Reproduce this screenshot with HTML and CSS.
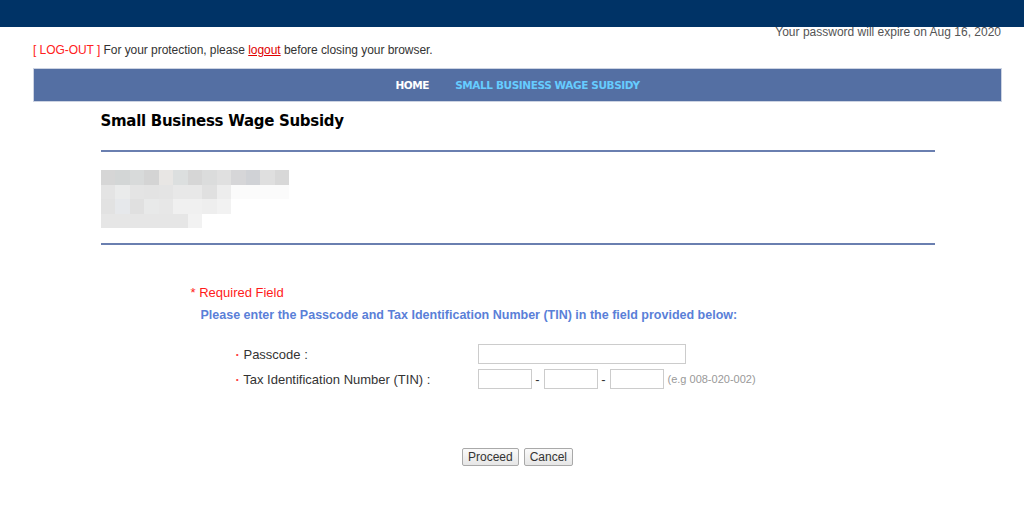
FILE: index.html
```html
<!DOCTYPE html>
<html>
<head>
    <meta charset="utf-8">
    <link rel="stylesheet" href="styles.css">
</head>
<body>

<div class="topbar"></div>
<div class="expire">Your password will expire on Aug 16, 2020</div>

<div class="page">
    <p class="logout-line">
        <span class="red">[ LOG-OUT ]</span> For your protection, please
        <a href="#" class="red-link">logout</a> before closing your browser.
    </p>

    <div class="nav">
        <a href="#" class="nav-home">HOME</a>
        <a href="#" class="nav-current">SMALL BUSINESS WAGE SUBSIDY</a>
    </div>

    <div class="content">
        <h1 class="title">Small Business Wage Subsidy</h1>
        <hr class="rule rule-top">

        <div class="blurred">
            <span style="background:#d6d6d6"></span><span style="background:#d3d6d6"></span><span style="background:#d8dada"></span><span style="background:#d4d4d4"></span><span style="background:#e8e6e4"></span><span style="background:#dcdfdf"></span><span style="background:#d6d6d6"></span><span style="background:#dbdcdc"></span><span style="background:#e0e0e0"></span><span style="background:#d6d6d8"></span><span style="background:#d0d2d6"></span><span style="background:#dfdfdf"></span><span style="background:#d8d8d8"></span>
            <span style="background:#e4e4e4"></span><span style="background:#eaebeb"></span><span style="background:#e4e4e4"></span><span style="background:#e3e3e3"></span><span style="background:#e4e4e4"></span><span style="background:#e8e8e8"></span><span style="background:#e8e8e8"></span><span style="background:#e0e0e0"></span><span style="background:#ededed"></span><span style="background:#fbfbfb"></span><span style="background:#fbfbfb"></span><span style="background:#fbfbfb"></span><span style="background:#fbfbfb"></span>
            <span style="background:#e2e2e2"></span><span style="background:#e6e8eb"></span><span style="background:#e0e0e0"></span><span style="background:#e8e9e9"></span><span style="background:#e7e7e7"></span><span style="background:#f0f0f0"></span><span style="background:#f0f0f0"></span><span style="background:#eeeeee"></span><span style="background:#f2f2f2"></span><span></span><span></span><span></span><span></span>
            <span style="background:#e6e6e6"></span><span style="background:#e6e6e6"></span><span style="background:#e6e6e6"></span><span style="background:#e6e6e6"></span><span style="background:#e6e6e6"></span><span style="background:#e6e6e6"></span><span style="background:#f2f2f2"></span>
        </div>

        <hr class="rule rule-bottom">

        <form class="tin-form">
            <p class="required">* Required Field</p>
            <p class="instructions">Please enter the Passcode and Tax Identification Number (TIN) in the field provided below:</p>

            <div class="fields">
                <label class="field-label"><span class="dot">&middot;</span> Passcode :</label>
                <div><input type="password" class="passcode"></div>

                <label class="field-label"><span class="dot">&middot;</span> Tax Identification Number (TIN) :</label>
                <div class="tin-row">
                    <input type="text" class="tin" maxlength="3">
                    <span class="dash">-</span>
                    <input type="text" class="tin" maxlength="3">
                    <span class="dash">-</span>
                    <input type="text" class="tin" maxlength="3">
                    <span class="hint">(e.g 008-020-002)</span>
                </div>
            </div>

            <div class="buttons">
                <input type="submit" value="Proceed" class="btn">
                <input type="button" value="Cancel" class="btn">
            </div>
        </form>
    </div>
</div>

</body>
</html>
```

FILE: styles.css
```css
* {
    font-family: 'Liberation Sans', Arial, sans-serif;
}

body {
    margin: 0;
    background-color: white;
    color: #333;
}

.topbar {
    position: relative;
    z-index: 1;
    height: 27px;
    background-color: #003366;
}

.expire {
    margin-top: -2px;
    padding-right: 23px;
    text-align: right;
    font-size: 12px;
    line-height: 14px;
    color: #555;
}

.page {
    margin: 0 22px 0 33px;
}

.logout-line {
    margin: 4px 0 0 0;
    font-size: 12px;
    line-height: 14px;
    color: #333;
    letter-spacing: -0.05px;
}

.red {
    color: #ff2020;
}

.red-link {
    color: #e00000;
    text-decoration: underline;
}

.nav {
    margin-top: 11px;
    height: 32px;
    background-color: #546fa3;
    border: 1px solid #ccd3e2;
    display: flex;
    justify-content: center;
    align-items: center;
    gap: 26px;
}

.nav a {
    font-family: 'DejaVu Sans', Verdana, sans-serif;
    font-size: 10.5px;
    font-weight: bold;
    text-decoration: none;
    letter-spacing: -0.4px;
}

.nav-home {
    color: white;
}

.nav-current {
    color: #66ccff;
}

.content {
    width: 834px;
    margin: 0 auto;
}

.title {
    margin: 9px 0 0 0;
    font-family: 'DejaVu Sans', Verdana, sans-serif;
    font-size: 15px;
    line-height: 20px;
    color: black;
    letter-spacing: -0.3px;
}

.rule {
    border: 0;
    height: 2px;
    background-color: #6a7fb0;
}

.rule-top {
    margin: 19px 0 18px 0;
}

.rule-bottom {
    margin: 15px 0 0 0;
}

.blurred {
    display: grid;
    grid-template-columns: repeat(13, 14.5px);
    grid-auto-rows: 14.5px;
    width: 190px;
    margin: 0;
}

.tin-form {
    margin-top: 40px;
    padding-left: 90px;
}

.required {
    margin: 0;
    font-size: 13px;
    line-height: 16px;
    color: #ff1a1a;
}

.instructions {
    margin: 6px 0 0 10px;
    font-size: 12.5px;
    line-height: 16px;
    font-weight: bold;
    color: #5a7fd8;
}

.fields {
    margin: 21px 0 0 45px;
    display: grid;
    grid-template-columns: 242px auto;
    row-gap: 5px;
    align-items: center;
    font-size: 13px;
}

.field-label {
    color: #333;
}

.dot {
    color: #ff4040;
    font-weight: bold;
}

.fields input {
    height: 20px;
    box-sizing: border-box;
    border: 1px solid #cccccc;
    padding: 1px 3px;
    margin: 0;
}

.passcode {
    width: 208px;
}

.tin-row {
    display: flex;
    align-items: center;
}

.tin {
    width: 54px;
}

.dash {
    width: 12px;
    text-align: center;
    color: #333;
}

.hint {
    margin-left: 4px;
    font-size: 11px;
    color: #999;
}

.buttons {
    margin: 59px 0 0 -90px;
    display: flex;
    justify-content: center;
    gap: 5px;
}

.btn {
    height: 18px;
    padding: 0 5px;
    font-size: 12px;
    color: #333;
    background: linear-gradient(#fafafa, #e6e6e6);
    border: 1px solid #a9a9a9;
    border-radius: 2px;
}
```
